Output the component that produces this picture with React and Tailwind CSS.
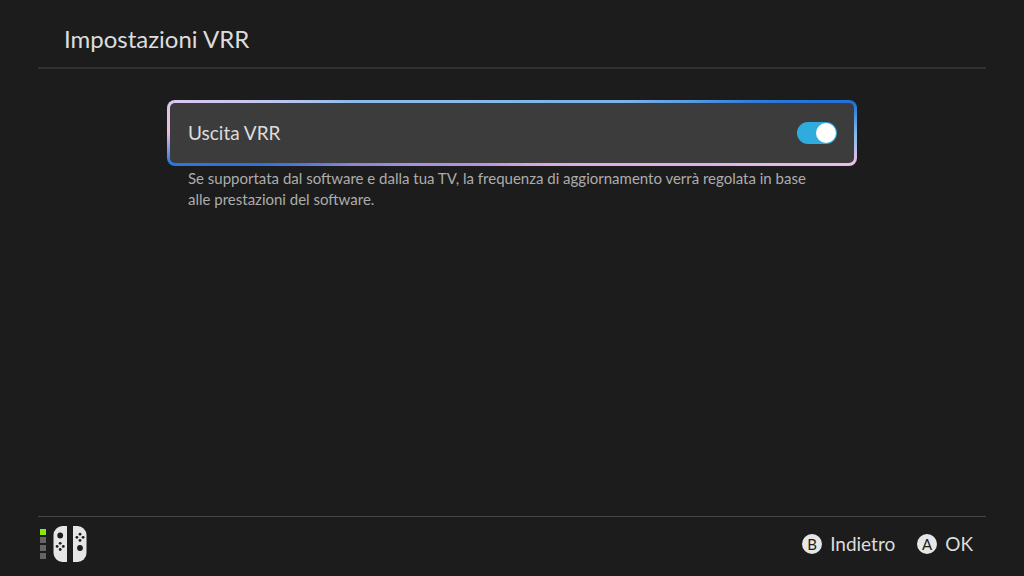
import { useState } from "react";

const JoyConIcon = () => (
  <svg
    viewBox="0 0 34 36"
    className="w-[34px] h-9"
    fill="#e6e6e6"
    aria-hidden="true"
  >
    <path d="M14 0H9.5A9 9 0 0 0 .5 9v18A9 9 0 0 0 9.5 36H14z" />
    <path d="M20 0h4.500A9 9 0 0 1 33.500 9v18A9 9 0 0 1 24.500 36H20z" />
    <g fill="#1c1c1c">
      <circle cx="7.200" cy="9.500" r="2.900" />
      <circle cx="7.200" cy="17.300" r="1.400" />
      <circle cx="7.200" cy="23.500" r="1.400" />
      <circle cx="4.100" cy="20.400" r="1.400" />
      <circle cx="10.300" cy="20.400" r="1.400" />
      <circle cx="27" cy="22" r="2.900" />
      <circle cx="27" cy="8.200" r="1.400" />
      <circle cx="27" cy="14.400" r="1.400" />
      <circle cx="23.900" cy="11.300" r="1.400" />
      <circle cx="30.100" cy="11.300" r="1.400" />
    </g>
  </svg>
);

const ButtonHint = ({ letter, label }) => (
  <button type="button" className="flex items-center gap-2 text-[19px] leading-7">
    <span className="flex size-5 items-center justify-center rounded-full bg-[#e6e6e6] text-[15px] text-[#1c1c1c]">
      {letter}
    </span>
    {label}
  </button>
);

const App = () => {
  const [vrr, setVrr] = useState(true);

  return (
    <div className="flex min-h-screen flex-col bg-[#1c1c1c] px-[38px] font-['Lato','Open_Sans',sans-serif] text-[#dcdcdc]">

      <header className="border-b-2 border-[#323232] px-[26px] pt-[23px] pb-3">
        <h1 className="text-2xl">
          Impostazioni VRR
        </h1>
      </header>

      <main className="mx-auto w-full max-w-[690px] flex-1 pt-[31px]">

        <div className="rounded-lg bg-[conic-gradient(#82b8e8_0deg,#7cb2e8_75deg,#5a9be0_80deg,#2a78d8_83deg,#2070d8_85deg,#80b8e8_90deg,#e8c0e8_95deg,#e0b0e8_99deg,#c8a0e0_180deg,#a890e0_253deg,#8c84d8_259deg,#3070d8_263deg,#2a78e0_265deg,#f0b8e0_270deg,#ddc8f0_275deg,#b8c4ee_278deg,#8abbe8_281deg,#82b8e8_360deg)] p-[3px]">
          <label className="flex h-[60px] items-center justify-between rounded-[5px] bg-[#3c3c3c] pr-[17px] pl-[18px]">
            <span className="text-[19px] leading-7">Uscita VRR</span>
            <input
              type="checkbox"
              role="switch"
              checked={vrr}
              onChange={() => setVrr(!vrr)}
              className="h-[22px] w-10 appearance-none rounded-full bg-[#777777] p-px before:block before:size-5 before:rounded-full before:bg-white checked:bg-[#2eacdd] checked:before:ml-auto"
            />
          </label>
        </div>

        <p className="mt-[2px] pr-10 pl-[21px] text-[15px] leading-[21px] text-[#acacac]">
          Se supportata dal software e dalla tua TV, la frequenza di
          aggiornamento verrà regolata in base alle prestazioni del software.
        </p>

      </main>

      <footer className="flex h-[60px] items-center justify-between border-t border-[#484848] pb-[5px]">

        <div className="flex items-center gap-[7px] pl-[2px]">
          <div className="flex h-[31px] flex-col justify-between">
            <span className="size-[6px] bg-[#8ce616]" />
            <span className="size-[6px] bg-[#656565]" />
            <span className="size-[6px] bg-[#656565]" />
            <span className="size-[6px] bg-[#656565]" />
          </div>
          <JoyConIcon />
        </div>

        <div className="flex gap-[22px] pr-[13px]">
          <ButtonHint letter="B" label="Indietro" />
          <ButtonHint letter="A" label="OK" />
        </div>

      </footer>

    </div>
  );
};

export default App;
